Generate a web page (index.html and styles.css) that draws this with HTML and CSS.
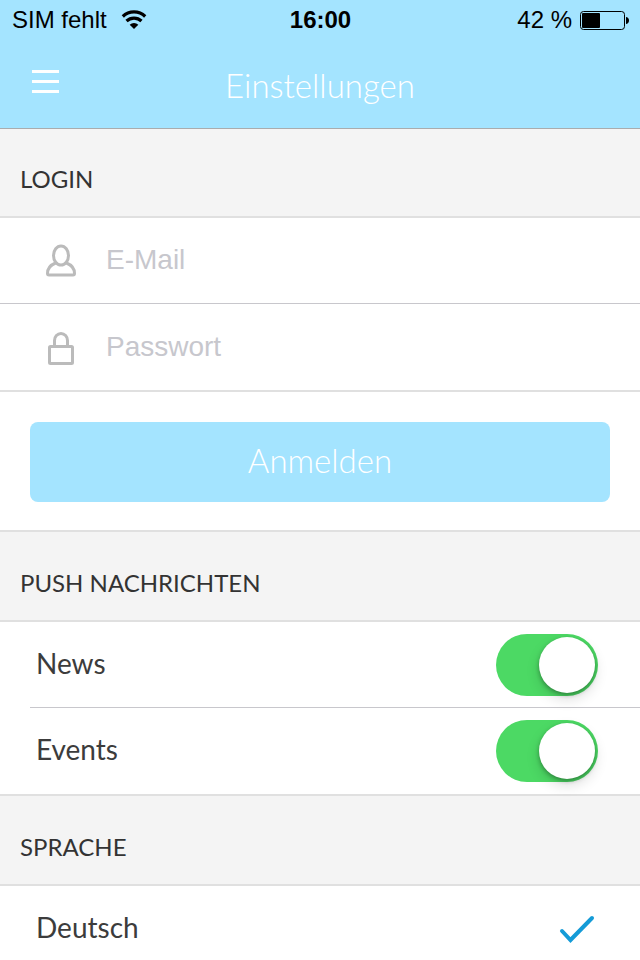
FILE: index.html
```html
<!DOCTYPE html>
<html lang="de">
<head>
  <meta charset="UTF-8">
  <meta name="viewport" content="width=device-width, initial-scale=1.0">
  <title>Einstellungen</title>
  <link rel="stylesheet" href="styles.css">
</head>
<body>
  <header class="header">
    <div class="status-bar">
      <div class="status-left">
        <span>SIM fehlt</span>
        <svg class="wifi" viewBox="0 0 26 20" width="26" height="20">
          <path d="M1.8 6.500a16 16 0 0 1 22.400 0" fill="none" stroke="#000" stroke-width="3.200"/>
          <path d="M5.500 11a11 11 0 0 1 15 0" fill="none" stroke="#000" stroke-width="3.200"/>
          <path d="M13 19l-4.300-4.300a6.200 6.200 0 0 1 8.600 0z"/>
        </svg>
      </div>
      <span class="status-time">16:00</span>
      <div class="status-right">
        <span>42 %</span>
        <svg viewBox="0 0 49 20" width="49" height="20">
          <rect x="0.5" y="1.5" width="44" height="18" rx="3" fill="none" stroke="#000"/>
          <rect x="2" y="3" width="18" height="15" rx="1"/>
          <path d="M46 7c1.500 0 3 1.500 3 3.500s-1.500 3.500-3 3.500z"/>
        </svg>
      </div>
    </div>
    <div class="nav-bar">
      <button type="button" class="menu-button" aria-label="Menü">
        <svg viewBox="0 0 28 24" width="28" height="24">
          <path d="M0 1.500h27M0 11.500h27M0 21.500h27" stroke="#fff" stroke-width="3"/>
        </svg>
      </button>
      <h1>Einstellungen</h1>
    </div>
  </header>

  <main>
    <h2 class="section-title">Login</h2>
    <form class="login-form">
      <div class="field">
        <label for="email" aria-label="E-Mail">
          <svg viewBox="0 0 32 34" width="32" height="34" class="icon">
            <ellipse cx="16" cy="11.500" rx="7.500" ry="9.500"/>
            <path d="M10.500 19C5.500 21 2.500 25 2.500 29.500q0 1.500 1.500 1.500h24q1.500 0 1.500-1.500c0-4.500-3-8.500-8-10.500"/>
          </svg>
        </label>
        <input type="email" id="email" name="email" placeholder="E-Mail">
      </div>
      <div class="field">
        <label for="password" aria-label="Passwort">
          <svg viewBox="0 0 32 34" width="32" height="34" class="icon">
            <rect x="4.500" y="15.500" width="23" height="17" rx="1"/>
            <path d="M9.500 15.500V9.500a6.500 7 0 0 1 13 0v6"/>
          </svg>
        </label>
        <input type="password" id="password" name="password" placeholder="Passwort">
      </div>
      <div class="form-action">
        <button type="submit" class="login-button">Anmelden</button>
      </div>
    </form>

    <h2 class="section-title">Push Nachrichten</h2>
    <div class="list">
      <div class="row">
        <label for="news">News</label>
        <input type="checkbox" id="news" class="switch" checked>
      </div>
      <div class="row">
        <label for="events">Events</label>
        <input type="checkbox" id="events" class="switch" checked>
      </div>
    </div>

    <h2 class="section-title">Sprache</h2>
    <div class="list">
      <div class="row">
        <label for="lang-de">Deutsch</label>
        <input type="radio" id="lang-de" name="lang" class="choice" checked>
        <svg class="check" viewBox="0 0 40 30" width="40" height="30">
          <path d="M4 17l8.500 9L34 4" fill="none" stroke="#149bd7" stroke-width="4" stroke-linecap="round"/>
        </svg>
      </div>
    </div>
  </main>
</body>
</html>
```

FILE: styles.css
```css
* {
  box-sizing: border-box;
}
body {
  height: 100vh;
  margin: 0;
  overflow: hidden;
  background: #fff;
  color: #333;
  font-family: Avenir, Lato, sans-serif;
}
h1, h2 {
  margin: 0;
}
svg {
  display: block;
}

/* header */
.header {
  background: #a4e4ff;
  border-bottom: 1px solid #a9acae;
}
.status-bar {
  display: grid;
  grid-template-columns: 1fr auto 1fr;
  align-items: center;
  height: 40px;
  padding: 0 11px 0 12px;
  color: #000;
  font: 24px/40px "Liberation Sans", Arial, sans-serif;
}
.status-left, .status-right {
  display: flex;
  align-items: center;
  gap: 14px;
}
.status-right {
  justify-content: flex-end;
  gap: 8px;
}
.status-time {
  font-weight: bold;
}
.nav-bar {
  display: grid;
  grid-template-columns: 64px 1fr 64px;
  align-items: center;
  height: 88px;
  padding-top: 2px;
}
.menu-button {
  padding: 0 0 6px 32px;
  border: none;
  background: none;
  cursor: pointer;
}
.nav-bar h1 {
  color: #fff;
  font-size: 33px;
  font-weight: 300;
  line-height: 40px;
  text-align: center;
}

/* sections */
.section-title {
  padding: 32px 20px 18px;
  background: #f4f4f4;
  border-top: 2px solid #e0e0e0;
  border-bottom: 2px solid #e0e0e0;
  font-size: 24px;
  font-weight: 400;
  line-height: 38px;
  text-transform: uppercase;
}
.header + main > .section-title:first-child {
  padding-top: 31px;
  border-top: none;
}

/* login */
.field {
  display: flex;
  align-items: center;
  height: 86px;
  padding-left: 45px;
  border-bottom: 1px solid #c8c7cc;
}
.field + .field {
  padding-top: 2px;
  border-bottom: none;
}
.field input {
  flex: 1;
  min-width: 0;
  height: 84px;
  padding: 0 29px 2px;
  border: none;
  outline: none;
  background: none;
  color: #333;
  font: 28px "Liberation Sans", Arial, sans-serif;
}
.field input::placeholder {
  color: #c7c7cd;
}
.icon {
  fill: none;
  stroke: #bbb;
  stroke-width: 3;
}
.form-action {
  padding: 30px 30px 28px;
  border-top: 2px solid #e0e0e0;
}
.login-button {
  width: 100%;
  height: 80px;
  padding: 0 0 5px;
  border: none;
  border-radius: 8px;
  background: #a4e4ff;
  color: #fff;
  font-family: inherit;
  font-size: 33px;
  font-weight: 300;
  cursor: pointer;
}

/* lists */
.list {
  padding-left: 30px;
}
.row {
  display: flex;
  align-items: center;
  height: 85px;
  padding: 0 42px 0 6px;
}
.row + .row {
  height: 87px;
  border-top: 1px solid #c8c7cc;
}
.row label {
  flex: 1;
  padding-bottom: 4px;
  color: #3c3c3c;
  font-size: 28px;
  line-height: 36px;
}
.switch {
  width: 102px;
  height: 62px;
  margin: 0;
  padding: 3px;
  appearance: none;
  border-radius: 31px;
  background: #e5e5e5;
  cursor: pointer;
}
.switch::before {
  content: "";
  display: block;
  width: 56px;
  height: 56px;
  border-radius: 50%;
  background: #fff;
  box-shadow: 0 2px 4px rgba(0, 0, 0, 0.3), 0 6px 14px rgba(0, 0, 0, 0.14);
}
.switch:checked {
  background: #4cd964;
}
.switch:checked::before {
  margin-left: auto;
}
.choice {
  margin: 0;
  appearance: none;
}
.check {
  visibility: hidden;
}
.choice:checked + .check {
  visibility: visible;
}
```
